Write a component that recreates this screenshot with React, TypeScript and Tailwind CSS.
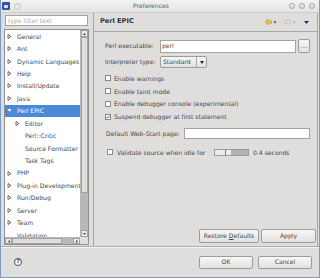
import React from "react";

type Node = { label: string; level: 1 | 2; arrow: "right" | "down" | "none"; selected?: boolean };

const tree: Node[] = [
  { label: "General", level: 1, arrow: "right" },
  { label: "Ant", level: 1, arrow: "right" },
  { label: "Dynamic Languages", level: 1, arrow: "right" },
  { label: "Help", level: 1, arrow: "right" },
  { label: "Install/Update", level: 1, arrow: "right" },
  { label: "Java", level: 1, arrow: "right" },
  { label: "Perl EPIC", level: 1, arrow: "down", selected: true },
  { label: "Editor", level: 2, arrow: "right" },
  { label: "Perl::Critic", level: 2, arrow: "none" },
  { label: "Source Formatter", level: 2, arrow: "none" },
  { label: "Task Tags", level: 2, arrow: "none" },
  { label: "PHP", level: 1, arrow: "right" },
  { label: "Plug-in Development", level: 1, arrow: "right" },
  { label: "Run/Debug", level: 1, arrow: "right" },
  { label: "Server", level: 1, arrow: "right" },
  { label: "Team", level: 1, arrow: "right" },
  { label: "Validation", level: 1, arrow: "none" },
];

function Arrow({ dir, white }: { dir: "right" | "down"; white?: boolean }) {
  const c = white ? "#ffffff" : "#5a5a5a";
  return (
    <svg width="5" height="5" viewBox="0 0 5 5" className="shrink-0">
      {dir === "right" ? (
        <path d="M1 0.5 L4 2.5 L1 4.5 Z" fill="none" stroke={c} strokeWidth="0.9" />
      ) : (
        <path d="M0.5 1 L4.5 1 L2.5 4 Z" fill={c} />
      )}
    </svg>
  );
}

function Btn({ children, className }: { children: React.ReactNode; className: string }) {
  return (
    <div
      className={
        "flex items-center justify-center rounded-[2px] border border-[#9c9c9a] bg-gradient-to-b from-[#f7f7f6] to-[#e2e1df] text-[6.1px] text-[#474747] " +
        className
      }
    >
      {children}
    </div>
  );
}

function Check({ checked }: { checked?: boolean }) {
  return (
    <div className="flex h-[6px] w-[6px] shrink-0 items-center justify-center border border-[#8a8a8a] bg-white">
      {checked && (
        <svg width="4" height="4" viewBox="0 0 4 4">
          <path d="M0.5 2 L1.6 3.2 L3.5 0.6" fill="none" stroke="#444" strokeWidth="0.8" />
        </svg>
      )}
    </div>
  );
}

function Circle() {
  return <div className="h-[6px] w-[6px] rounded-full border border-[#a5a5a3] bg-gradient-to-b from-[#f4f4f4] to-[#d6d6d4]" />;
}

export default function App() {
  return (
    <div className="flex h-[278px] w-[320px] flex-col overflow-hidden border-x border-b border-[#7d9ac4] bg-[#dfdedc] font-['DejaVu_Sans',sans-serif] text-[#474747]">
      {/* title bar */}
      <div className="flex h-[13px] shrink-0 items-center border-b border-[#cfcecc] bg-gradient-to-b from-[#f3f3f2] to-[#e4e3e1] pl-[1px] pr-[4px]">
        <div className="flex h-[8px] w-[8px] items-center justify-center rounded-[1px] bg-[#2f57a8]">
          <div className="h-[3px] w-[4px] rounded-[1px] bg-[#dfe8f7]" />
        </div>
        <div className="ml-[4px] h-[7px] w-[7px] rounded-full border border-[#c4c4c2] bg-[#e9e9e8]" />
        <div className="flex-1 pr-[8px] text-center text-[6.1px] text-[#5a5a5a]">Preferences</div>
        <div className="flex gap-[4px]">
          <Circle />
          <Circle />
          <Circle />
        </div>
      </div>

      {/* body */}
      <div className="flex h-[233px] shrink-0">
        {/* left pane */}
        <div className="flex w-[88px] shrink-0 flex-col">
          <div className="ml-[4px] mt-[2px] flex h-[11px] w-[83px] items-center border border-[#a3a3a1] bg-white pl-[2px] text-[6.1px] text-[#ababab]">
            type filter text
          </div>
          <div className="ml-[3px] mt-[3px] grid h-[216px] w-[85px] grid-cols-[75px_8px] grid-rows-[207px_7px] border border-[#8f8f8d] bg-white">
            <div className="overflow-hidden">
              {tree.map((n) => (
                <div
                  key={n.label}
                  className={
                    "flex h-[12.45px] items-center whitespace-nowrap text-[6.1px] " +
                    (n.selected ? "bg-[#4a89d6] text-white" : "")
                  }
                >
                  <div className={(n.level === 1 ? "w-[12px] pl-[2px]" : "w-[20px] pl-[10px]") + " flex shrink-0"}>
                    {n.arrow !== "none" && <Arrow dir={n.arrow} white={n.selected} />}
                  </div>
                  <span>{n.label}</span>
                </div>
              ))}
            </div>
            {/* vertical scrollbar */}
            <div className="flex flex-col bg-[#b9b8b6] pl-[1px]">
              <div className="flex h-[7px] items-center justify-center border border-[#a2a2a0] bg-[#ebebea]">
                <svg width="3" height="2" viewBox="0 0 3 2"><path d="M0 2 L1.5 0 L3 2 Z" fill="#444" /></svg>
              </div>
              <div className="h-[156px] border border-[#a2a2a0] bg-[#dedddb]" />
              <div className="flex-1" />
              <div className="flex h-[7px] items-center justify-center border border-[#a2a2a0] bg-[#ebebea]">
                <svg width="3" height="2" viewBox="0 0 3 2"><path d="M0 0 L1.5 2 L3 0 Z" fill="#444" /></svg>
              </div>
            </div>
            {/* horizontal scrollbar */}
            <div className="flex bg-[#b9b8b6] pt-[1px]">
              <div className="flex w-[7px] items-center justify-center border border-[#a2a2a0] bg-[#ebebea]">
                <svg width="2" height="3" viewBox="0 0 2 3"><path d="M2 0 L0 1.5 L2 3 Z" fill="#444" /></svg>
              </div>
              <div className="w-[50px] border border-[#a2a2a0] bg-[#dedddb]" />
              <div className="flex-1" />
              <div className="flex w-[7px] items-center justify-center border border-[#a2a2a0] bg-[#ebebea]">
                <svg width="2" height="3" viewBox="0 0 2 3"><path d="M0 0 L2 1.5 L0 3 Z" fill="#444" /></svg>
              </div>
            </div>
            <div className="bg-[#dfdedc]" />
          </div>
        </div>

        {/* right pane */}
        <div className="ml-[4px] flex w-[225px] shrink-0 flex-col border-x border-[#a8a7a5]">
          <div className="flex h-[19px] shrink-0 items-center border-b border-[#a8a7a5] pl-[6px] pr-[8px]">
            <span className="text-[6.6px] font-semibold text-[#333]">Perl EPIC</span>
            <div className="ml-auto flex items-center">
              <svg width="7" height="6" viewBox="0 0 7 6">
                <path d="M0 3 L3 0 L3 1.8 L7 1.8 L7 4.2 L3 4.2 L3 6 Z" fill="#f0c431" stroke="#b38a14" strokeWidth="0.5" />
              </svg>
              <svg width="4" height="3" viewBox="0 0 4 3" className="ml-[1px]"><path d="M0.5 0.5 L3.5 0.5 L2 2.5 Z" fill="#333" /></svg>
              <svg width="7" height="6" viewBox="0 0 7 6" className="ml-[7px]">
                <path d="M7 3 L4 0 L4 1.8 L0 1.8 L0 4.2 L4 4.2 L4 6 Z" fill="#e4e4e2" stroke="#a8a8a6" strokeWidth="0.5" />
              </svg>
              <svg width="4" height="3" viewBox="0 0 4 3" className="ml-[1px]"><path d="M0.5 0.5 L3.5 0.5 L2 2.5 Z" fill="#aaa" /></svg>
              <svg width="5" height="3" viewBox="0 0 5 3" className="ml-[8px]"><path d="M0 0 L5 0 L2.5 3 Z" fill="#1f2a6b" /></svg>
            </div>
          </div>

          <div className="flex flex-1 flex-col pl-[11px] pr-[1px] text-[6.1px]">
            <div className="mt-[7px] flex h-[14px] items-center">
              <span className="w-[55px] shrink-0">Perl executable:</span>
              <div className="flex h-[13px] w-[136px] items-center border border-[#a3a3a1] bg-white pl-[1px]">perl</div>
              <Btn className="ml-[2px] h-[14px] w-[12px]">...</Btn>
            </div>
            <div className="mt-[3px] flex h-[12px] items-center">
              <span className="w-[55px] shrink-0">Interpreter type:</span>
              <div className="flex h-[12px] w-[47px] items-stretch rounded-[2px] border border-[#9c9c9a] bg-gradient-to-b from-[#f7f7f6] to-[#e2e1df]">
                <span className="flex w-[36px] items-center border-r border-[#a8a8a6] pl-[2px]">Standard</span>
                <span className="flex flex-1 items-center justify-center">
                  <svg width="4" height="3" viewBox="0 0 4 3"><path d="M0 0 L4 0 L2 3 Z" fill="#222" /></svg>
                </span>
              </div>
            </div>
            {[
              ["Enable warnings", false],
              ["Enable taint mode", false],
              ["Enable debugger console (experimental)", false],
              ["Suspend debugger at first statement", true],
            ].map(([t, c], i) => (
              <div key={t as string} className={(i === 0 ? "mt-[4px]" : "") + " flex h-[12.8px] items-center"}>
                <Check checked={c as boolean} />
                <span className="ml-[3px]">{t as string}</span>
              </div>
            ))}
            <div className="ml-[1px] mt-[5px] flex h-[11px] items-center">
              <span className="w-[78px] shrink-0">Default Web-Start page:</span>
              <div className="h-[11px] w-[126px] border border-[#a3a3a1] bg-white" />
            </div>
            <div className="ml-[2px] mt-[9px] flex h-[8px] items-center">
              <Check />
              <span className="ml-[4px] w-[97px] shrink-0">Validate source when idle for</span>
              <div className="flex h-[7px] w-[35px] border border-[#9a9a98]">
                <div className="w-[10px] bg-[#ececeb]" />
                <div className="w-[1px] bg-[#7a7a78]" />
                <div className="w-[5px] bg-[#ececeb]" />
                <div className="flex-1 bg-[#b3b2b0]" />
              </div>
              <span className="ml-[4px]">0.4 seconds</span>
            </div>
            <div className="mb-[3px] mt-auto flex justify-end gap-[2px]">
              <Btn className="h-[14px] w-[60px]">
                <span>
                  Restore <span className="underline">D</span>efaults
                </span>
              </Btn>
              <Btn className="h-[14px] w-[55px]">Apply</Btn>
            </div>
          </div>
        </div>
      </div>

      {/* separator */}
      <div className="h-[1px] shrink-0 bg-[#aeadab]" />
      <div className="h-[1px] shrink-0 bg-[#f4f4f3]" />

      {/* bottom bar */}
      <div className="flex flex-1 items-center pb-[1px] pl-[13px] pr-[7px]">
        <div className="flex h-[8px] w-[8px] items-center justify-center rounded-full border border-[#4a4a4a] bg-white text-[5.5px] font-bold leading-none text-[#2f4f8f]">
          ?
        </div>
        <div className="ml-auto flex gap-[5px]">
          <Btn className="h-[13px] w-[54px]">OK</Btn>
          <Btn className="h-[13px] w-[54px]">Cancel</Btn>
        </div>
      </div>
    </div>
  );
}
